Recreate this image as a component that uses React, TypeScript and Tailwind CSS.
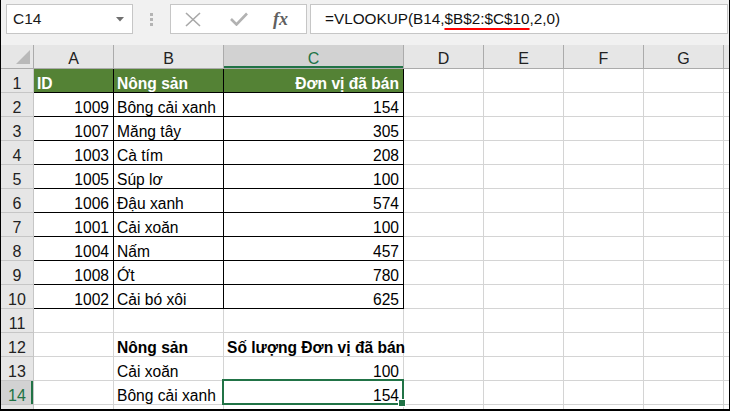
import React from "react";

type Cell = { text?: string; bold?: boolean; align?: "left" | "right" };

const COL_LETTERS = ["A", "B", "C", "D", "E", "F", "G"];

const DATA: [string, string, string][] = [
  ["1009", "Bông cải xanh", "154"],
  ["1007", "Măng tây", "305"],
  ["1003", "Cà tím", "208"],
  ["1005", "Súp lơ", "100"],
  ["1006", "Đậu xanh", "574"],
  ["1001", "Cải xoăn", "100"],
  ["1004", "Nấm", "457"],
  ["1008", "Ớt", "780"],
  ["1002", "Cải bó xôi", "625"],
];

const font = "font-['Liberation_Sans',Arial,sans-serif]";

function FormulaBar() {
  return (
    <div className="flex h-[45px] items-start bg-[#f1f1f1] pl-[5px] pt-[4px]">
      {/* name box */}
      <div className="flex h-[30px] w-[127px] items-center border border-[#c6c6c6] bg-white pl-[6px]">
        <span className="flex-1 text-[15.5px] text-[#1a1a1a]">C14</span>
        <svg width="8" height="5" viewBox="0 0 8 5" className="mr-[8px]">
          <polygon points="0,0 8,0 4,4.5" fill="#6f6f6f" />
        </svg>
      </div>
      {/* grip dots */}
      <div className="flex w-[37px] flex-col items-center gap-[2px] pt-[9px]">
        <div className="h-[3px] w-[3px] bg-[#b4b4b4]" />
        <div className="h-[3px] w-[3px] bg-[#b4b4b4]" />
        <div className="h-[3px] w-[3px] bg-[#b4b4b4]" />
      </div>
      {/* cancel / enter / fx */}
      <div className="flex h-[30px] w-[137px] items-center border border-[#c6c6c6] bg-white">
        <svg width="16" height="15" viewBox="0 0 16 15" className="ml-[14px]">
          <path d="M1 1 L15 14 M15 1 L1 14" stroke="#a8a8a8" strokeWidth="1.6" fill="none" />
        </svg>
        <svg width="18" height="14" viewBox="0 0 18 14" className="ml-[29px]">
          <path d="M1 7 L6.5 12.5 L17 1.5" stroke="#b2b2b2" strokeWidth="2.6" fill="none" />
        </svg>
        <span className="ml-[25px] font-['Liberation_Serif',serif] text-[18px] font-bold italic leading-none text-[#606060]">
          fx
        </span>
      </div>
      {/* formula */}
      <div className="ml-[3px] mr-[1px] flex h-[30px] flex-1 items-center border border-[#c6c6c6] bg-white pl-[14px]">
        <span className="text-[15.3px] text-[#111]">
          =VLOOKUP(B14,
          <span className="underline decoration-[#ff0000] decoration-2 underline-offset-[4px]">$B$2:$C$10</span>
          ,2,0)
        </span>
      </div>
    </div>
  );
}

function ColumnHeader() {
  return (
    <div className="grid h-[24px] grid-cols-[33px_80px_110px_180px_80px_80px_80px_80px_5px] bg-[#e6e6e6]">
      <div className="relative border-r border-b border-[#ababab]">
        <svg width="33" height="24" className="absolute left-0 top-0">
          <polygon points="29,5 29,19 15,19" fill="#b9b9b9" />
        </svg>
      </div>
      {COL_LETTERS.map((l) => {
        const sel = l === "C";
        return (
          <div
            key={l}
            className={
              sel
                ? "flex items-end justify-center border-r border-b border-[#ababab] bg-[#d2d2d2] pb-[1px] text-[16px] leading-[16px] text-[#217346] shadow-[inset_0_-2px_0_#217346]"
                : "flex items-end justify-center border-r border-b border-[#ababab] pb-[1px] text-[16px] leading-[16px] text-[#222]"
            }
          >
            {l}
          </div>
        );
      })}
      <div className="border-b border-[#ababab]" />
    </div>
  );
}

function buildRows(): Cell[][] {
  const rows: Cell[][] = [];
  rows.push([
    { text: "ID", bold: true, align: "left" },
    { text: "Nông sản", bold: true, align: "left" },
    { text: "Đơn vị đã bán", bold: true, align: "right" },
  ]);
  DATA.forEach(([a, b, c]) =>
    rows.push([
      { text: a, align: "right" },
      { text: b, align: "left" },
      { text: c, align: "right" },
    ])
  );
  rows.push([{}, {}, {}]);
  rows.push([{}, { text: "Nông sản", bold: true }, { text: "Số lượng Đơn vị đã bán", bold: true }]);
  rows.push([{}, { text: "Cải xoăn" }, { text: "100", align: "right" }]);
  rows.push([{}, { text: "Bông cải xanh" }, { text: "154", align: "right" }]);
  return rows;
}

function SheetRow({ n, cells }: { n: number; cells: Cell[] }) {
  const inTable = n <= 10;
  const isHead = n === 1;
  const rowSel = n === 14;
  return (
    <div className="grid h-[24px] grid-cols-[33px_80px_110px_180px_80px_80px_80px_80px_5px]">
      <div
        className={
          rowSel
            ? "flex items-end justify-center border-r border-b border-[#c6c6c6] bg-[#d2d2d2] text-[16px] leading-[16px] text-[#217346] shadow-[inset_-2px_0_0_#217346]"
            : "flex items-end justify-center border-r border-b border-[#c6c6c6] bg-[#e6e6e6] text-[16px] leading-[16px] text-[#222]"
        }
      >
        {n}
      </div>
      {cells.map((c, i) => {
        const selected = n === 14 && i === 2;
        return (
          <div
            key={i}
            className={[
              "relative flex items-end whitespace-nowrap border-r border-b px-[4px] text-[15.6px] leading-[16px]",
              inTable ? "border-black" : "border-[#d4d4d4]",
              isHead ? "bg-[#548235] text-white" : "bg-white text-black",
              c.align === "right" ? "justify-end" : "justify-start pl-[3px]",
              c.bold ? "font-bold" : "",
              c.bold && !isHead ? "text-[15.2px]" : "",
              selected ? "z-10" : "",
            ].join(" ")}
          >
            {c.text}
            {selected && (
              <div className="absolute -left-[2px] -top-[2px] -right-px -bottom-px border-2 border-[#217346]">
                <div className="absolute -right-[4px] -bottom-[4px] h-[6px] w-[6px] border border-white bg-[#217346] box-content" />
              </div>
            )}
          </div>
        );
      })}
      {[0, 1, 2, 3].map((i) => (
        <div key={i} className="border-r border-b border-[#d4d4d4] bg-white" />
      ))}
      <div className="border-b border-[#d4d4d4] bg-white" />
    </div>
  );
}

export default function App() {
  const rows = buildRows();
  return (
    <div
      className={`${font} h-[411px] w-[730px] overflow-hidden border-x border-b-2 border-black bg-white text-black`}
    >
      <FormulaBar />
      <ColumnHeader />
      {rows.map((cells, i) => (
        <SheetRow key={i} n={i + 1} cells={cells} />
      ))}
      <div className="grid h-[4px] grid-cols-[33px_80px_110px_180px_80px_80px_80px_80px_5px]">
        <div className="border-r border-[#c6c6c6] bg-[#e6e6e6]" />
        {[0, 1, 2, 3, 4, 5, 6].map((i) => (
          <div key={i} className="border-r border-[#d4d4d4] bg-white" />
        ))}
        <div className="bg-white" />
      </div>
    </div>
  );
}
